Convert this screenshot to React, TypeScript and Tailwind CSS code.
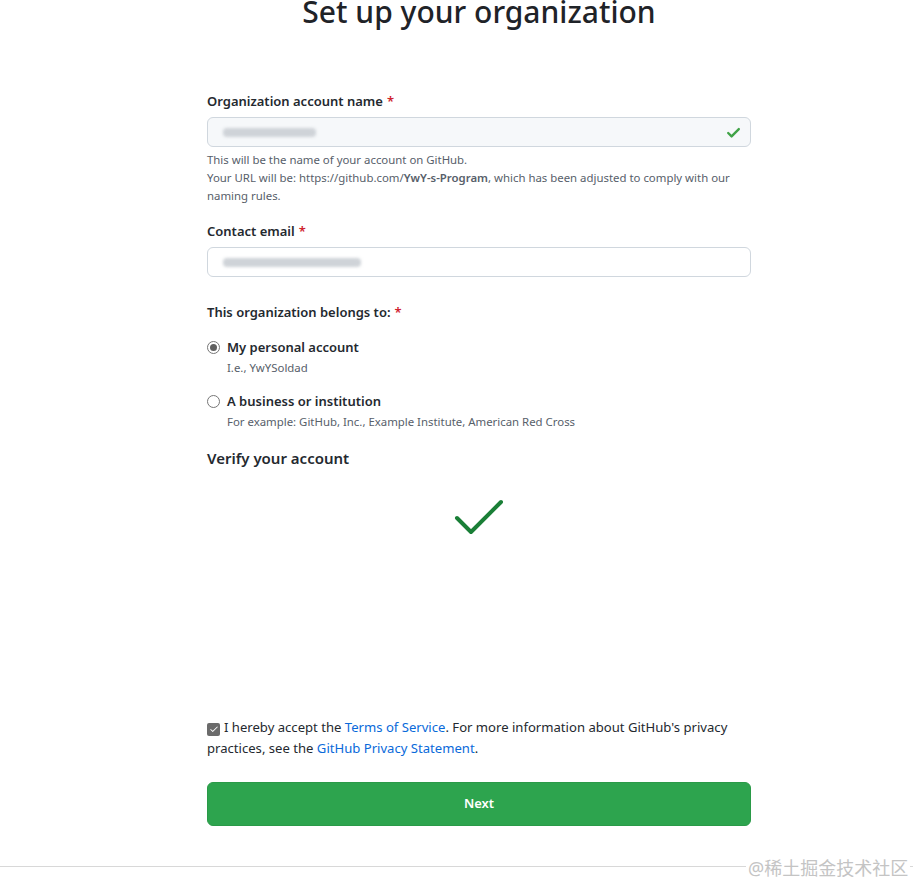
const font = { fontFamily: '"Segoe UI", "Noto Sans", "Noto Sans CJK SC", sans-serif' };

function Req() {
  return <span className="text-[#cf222e] ml-1">*</span>;
}

function Blurred({ w }: { w: number }) {
  // stand-in for the redacted value
  return (
    <div className="flex items-center gap-1 blur-[1.5px]" style={{ width: w }}>
      <div className="h-[9px] flex-1 bg-[#cfd3d8] rounded-sm" />
    </div>
  );
}

function Radio({ checked }: { checked?: boolean }) {
  return (
    <span className="w-[13px] h-[13px] rounded-full border border-[#767676] bg-white flex items-center justify-center shrink-0 mt-[4px]">
      {checked && <span className="w-[7px] h-[7px] rounded-full bg-[#5f5f5f]" />}
    </span>
  );
}

export default function App() {
  return (
    <div className="relative w-[913px] h-[887px] bg-white overflow-hidden text-[#24292f]" style={font}>
      <div className="w-[544px] ml-[207px]">
        <h1 className="-mt-[8px] text-[30px] leading-[40px] font-medium text-center text-[#1f2328] whitespace-nowrap">
          Set up your organization
        </h1>

        <label className="block mt-[59px] text-[13px] leading-[21px] font-semibold">
          Organization account name
          <Req />
        </label>
        <div className="mt-[5px] h-[30px] border border-[#d0d7de] bg-[#f6f8fa] rounded-md flex items-center justify-between pl-[15px] pr-[8px]">
          <Blurred w={93} />
          <svg width="17" height="17" viewBox="0 0 16 16" fill="none">
            <path d="M3 8.5 L6.2 11.7 L13 4.8" stroke="#40a347" strokeWidth="2.2" strokeLinecap="round" strokeLinejoin="round" />
          </svg>
        </div>
        <p className="mt-[4px] text-[11.4px] leading-[18px] text-[#57606a]">
          This will be the name of your account on GitHub.
          <br />
          Your URL will be: https://github.com/<strong className="font-semibold">YwY-s-Program</strong>, which has been adjusted to comply with our naming rules.
        </p>

        <label className="block mt-[16px] text-[13px] leading-[21px] font-semibold">
          Contact email
          <Req />
        </label>
        <div className="mt-[5px] h-[30px] border border-[#d0d7de] bg-white rounded-md flex items-center pl-[15px]">
          <Blurred w={138} />
        </div>

        <p className="mt-[25px] text-[13px] leading-[21px] font-semibold">
          This organization belongs to:
          <Req />
        </p>

        <div className="mt-[14px] flex gap-[7px]">
          <Radio checked />
          <div>
            <p className="text-[13px] leading-[21px] font-semibold">My personal account</p>
            <p className="mt-[1px] text-[11.4px] leading-[18px] text-[#57606a]">I.e., YwYSoldad</p>
          </div>
        </div>
        <div className="mt-[14px] flex gap-[7px]">
          <Radio />
          <div>
            <p className="text-[13px] leading-[21px] font-semibold">A business or institution</p>
            <p className="mt-[1px] text-[11.4px] leading-[18px] text-[#57606a]">
              For example: GitHub, Inc., Example Institute, American Red Cross
            </p>
          </div>
        </div>

        <h2 className="mt-[15px] text-[15px] leading-[24px] font-semibold">Verify your account</h2>
        <div className="h-[247px] flex justify-center pt-[28px]">
          <svg width="52" height="40" viewBox="0 0 52 40" fill="none">
            <path d="M4 20 L18 34 L48 4" stroke="#1a7f37" strokeWidth="4" strokeLinecap="round" strokeLinejoin="round" />
          </svg>
        </div>

        <div className="text-[13.1px] leading-[21px] text-[#24292f]">
          <span className="inline-flex align-[-2px] w-[13px] h-[13px] rounded-[2px] bg-[#6b6b6b] items-center justify-center mr-[4px]">
            <svg width="10" height="10" viewBox="0 0 16 16" fill="white">
              <path d="M13.78 4.22a.75.75 0 0 1 0 1.06l-7.25 7.25a.75.75 0 0 1-1.06 0L2.22 9.28a.751.751 0 0 1 .018-1.042.751.751 0 0 1 1.042-.018L6 10.94l6.72-6.72a.75.75 0 0 1 1.06 0Z" />
            </svg>
          </span>
          I hereby accept the <a className="text-[#0969da]">Terms of Service</a>. For more information about GitHub's privacy practices, see the{" "}
          <a className="text-[#0969da]">GitHub Privacy Statement</a>.
        </div>

        <button className="mt-[23px] w-full h-[44px] rounded-md bg-[#2da44e] border border-[#2a9a48] text-white text-[13px] font-semibold">
          Next
        </button>
      </div>

      <div className="mt-[40px] border-t border-[#d8d8d8]" />

      <div className="absolute left-[746px] top-[857px] bg-white px-[2px] text-[18px] leading-[22px] text-[#c4c4c4]">
        @稀土掘金技术社区
      </div>
    </div>
  );
}
